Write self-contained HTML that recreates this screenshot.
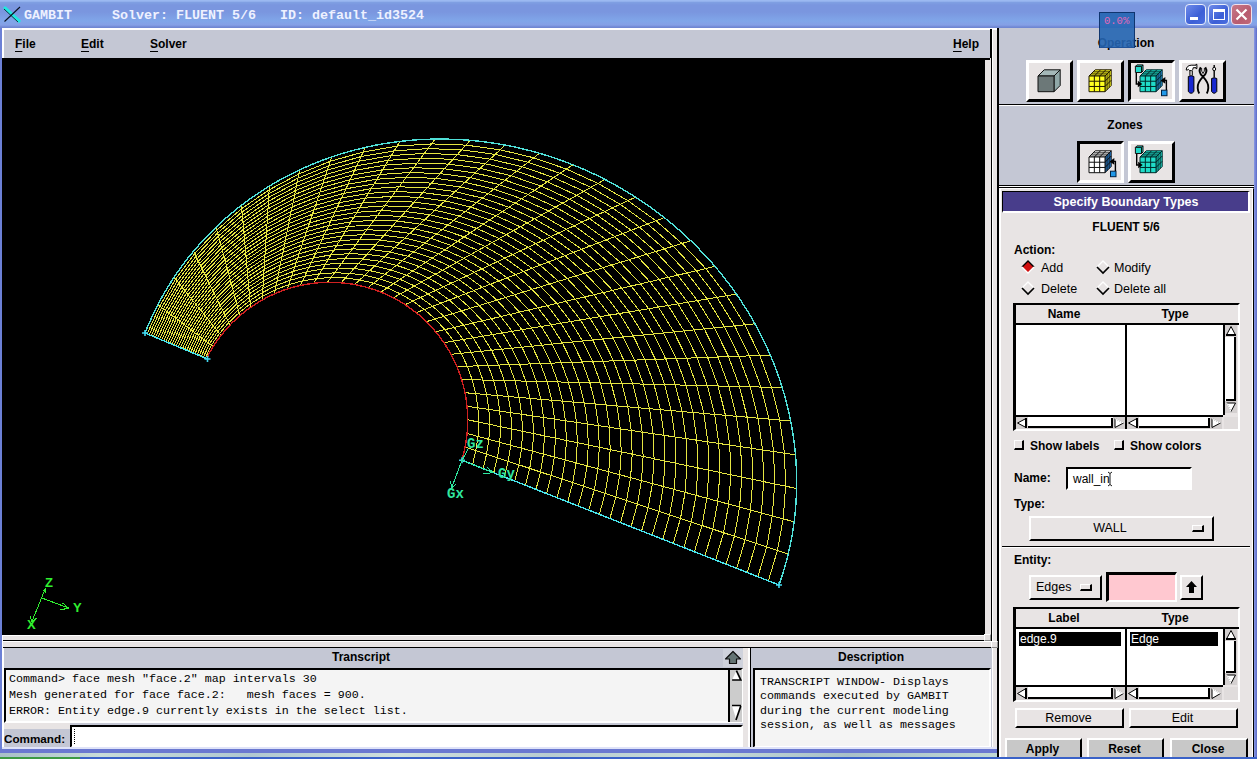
<!DOCTYPE html>
<html><head><meta charset="utf-8"><title>GAMBIT</title>
<style>
html,body{margin:0;padding:0;}
body{width:1257px;height:759px;overflow:hidden;position:relative;background:#6c80d6;font-family:"Liberation Sans",sans-serif;font-size:12px;color:#000;}
.a{position:absolute;box-sizing:border-box;}
.b{font-weight:bold;}
.g{background:#c4c7d4;}
.f{background:#e8e4e4;}
.raised{border-style:solid;border-color:#fff #000 #000 #fff;}
.sunken{border-style:solid;border-color:#000 #fff #fff #000;}
.lbl{position:absolute;white-space:nowrap;line-height:14px;}
.ctr{text-align:center;}
u{text-decoration-thickness:1px;text-underline-offset:2.5px;}
.mono{font-family:"Liberation Mono",monospace;}
</style></head><body>

<!-- title bar -->
<div class="a" id="title" style="left:0;top:0;width:1257px;height:28px;background:linear-gradient(#9bb9f1 0,#9bb9f1 1px,#7f9fe2 2.5px,#7a96df 5px,#7a96df 12px,#80a6e9 21px,#85a0e6 25px,#7088d4 27px,#6f86d0 28px);"></div>
<svg class="a" style="left:3px;top:5px" width="19" height="19" viewBox="0 0 19 19"><path d="M2,3 L16,16" stroke="#20e8e0" stroke-width="3.2" stroke-linecap="round"/><path d="M1,4 L15,17" stroke="#102030" stroke-width="0.9"/><path d="M1.5,16.5 L17,2" stroke="#0a1020" stroke-width="1.1"/></svg>
<div class="lbl mono b" style="left:24px;top:8px;font-size:13.33px;line-height:16px;color:#eef1ff;white-space:pre;">GAMBIT     Solver: FLUENT 5/6   ID: default_id3524</div>
<!-- window buttons -->
<div class="a" style="left:1185px;top:4px;width:21px;height:21px;border:1px solid #e8eefc;border-radius:4px;background:linear-gradient(135deg,#6f8cea,#3c5fd6 60%,#4a6ee0);"><div class="a" style="left:4px;top:12px;width:8px;height:3px;background:#fff"></div></div>
<div class="a" style="left:1208px;top:4px;width:21px;height:21px;border:1px solid #e8eefc;border-radius:4px;background:linear-gradient(135deg,#6f8cea,#3c5fd6 60%,#4a6ee0);"><div class="a" style="left:4px;top:4px;width:12px;height:11px;border:1px solid #fff;border-top:3px solid #fff"></div></div>
<div class="a" style="left:1231px;top:4px;width:21px;height:21px;border:1px solid #f0e0ec;border-radius:4px;background:linear-gradient(135deg,#c87888,#b85c70 60%,#c06878);"><svg class="a" style="left:3px;top:3px" width="13" height="13"><path d="M1.5,1.5 L11.5,11.5 M11.5,1.5 L1.5,11.5" stroke="#fff" stroke-width="2.2"/></svg></div>

<!-- left window frame -->
<div class="a" style="left:2px;top:28px;width:995px;height:720px;background:#fff"></div>
<div class="a g" style="left:4px;top:30px;width:993px;height:718px;"></div>
<!-- menubar -->
<div class="a" style="left:990px;top:29px;width:2px;height:612px;background:#000"></div>
<div class="lbl b" style="left:15px;top:37px;"><u>F</u>ile</div>
<div class="lbl b" style="left:81px;top:37px;"><u>E</u>dit</div>
<div class="lbl b" style="left:150px;top:37px;"><u>S</u>olver</div>
<div class="lbl b" style="left:953px;top:37px;"><u>H</u>elp</div>
<!-- canvas -->
<div class="a" style="left:3px;top:58px;width:988px;height:583px;background:#e8e4e4"></div>
<div class="a" style="left:3px;top:58px;width:987px;height:2px;background:#000"></div>
<div class="a" style="left:3px;top:640px;width:989px;height:1px;background:#000"></div>
<svg class="a" id="cv" style="left:2px;top:58px;background:#000" width="983" height="577" viewBox="-1 0 983 577">
<path d="M202.4,300.1 L208.3,287.2 L216.5,275.5 L225.7,264.6 L236.1,254.7 L247.3,245.9 L259.4,238.2 L272.3,231.8 L285.7,226.6 L299.5,222.9 L313.7,220.5 L328.0,219.5 L342.4,220.0 L356.7,221.9 L370.7,225.2 L384.3,229.9 L397.3,235.8 L409.8,243.1 L421.4,251.5 L432.2,261.0 L441.9,271.6 L450.6,283.0 L458.1,295.3 L464.3,308.2 L469.2,321.7 L472.8,335.6 L474.9,349.8 L475.7,364.1 L475.0,378.4 L472.8,392.5 L469.6,406.5M200.3,299.3 L206.5,285.8 L214.9,273.5 L224.5,262.2 L235.3,251.8 L247.0,242.5 L259.7,234.4 L273.1,227.6 L287.2,222.2 L301.7,218.3 L316.6,215.8 L331.6,214.8 L346.7,215.3 L361.7,217.3 L376.4,220.7 L390.7,225.6 L404.4,231.9 L417.4,239.5 L429.7,248.3 L441.0,258.3 L451.2,269.4 L460.3,281.4 L468.2,294.3 L474.8,307.9 L479.9,322.0 L483.6,336.6 L485.9,351.4 L486.6,366.4 L485.9,381.4 L483.6,396.1 L480.1,410.6M198.2,298.4 L204.7,284.4 L213.3,271.6 L223.3,259.7 L234.5,248.8 L246.7,239.1 L259.9,230.6 L273.9,223.5 L288.6,217.8 L303.9,213.7 L319.4,211.0 L335.2,210.0 L351.0,210.5 L366.7,212.6 L382.1,216.2 L397.1,221.4 L411.5,227.9 L425.1,235.9 L437.9,245.2 L449.8,255.6 L460.5,267.2 L470.1,279.8 L478.3,293.3 L485.2,307.5 L490.6,322.3 L494.5,337.5 L496.8,353.1 L497.6,368.7 L496.8,384.3 L494.4,399.7 L490.7,414.8M196.2,297.5 L202.8,283.0 L211.8,269.7 L222.1,257.2 L233.7,245.9 L246.4,235.7 L260.2,226.8 L274.8,219.4 L290.1,213.4 L306.0,209.1 L322.3,206.3 L338.8,205.2 L355.3,205.8 L371.7,208.0 L387.8,211.8 L403.5,217.1 L418.5,224.0 L432.8,232.3 L446.2,242.0 L458.6,252.9 L469.9,265.0 L479.8,278.2 L488.5,292.3 L495.7,307.1 L501.3,322.6 L505.4,338.5 L507.8,354.7 L508.6,371.0 L507.7,387.2 L505.2,403.3 L501.3,418.9M194.1,296.7 L201.0,281.6 L210.2,267.7 L220.9,254.8 L232.9,242.9 L246.1,232.3 L260.4,223.0 L275.6,215.2 L291.6,209.0 L308.2,204.5 L325.2,201.6 L342.4,200.4 L359.6,201.0 L376.7,203.3 L393.5,207.3 L409.9,212.9 L425.6,220.1 L440.5,228.7 L454.5,238.8 L467.4,250.2 L479.2,262.9 L489.6,276.6 L498.6,291.2 L506.1,306.7 L512.0,322.8 L516.2,339.4 L518.7,356.3 L519.5,373.3 L518.6,390.2 L515.9,406.8 L511.8,423.1M192.0,295.8 L199.1,280.2 L208.6,265.8 L219.7,252.3 L232.1,240.0 L245.8,228.9 L260.6,219.2 L276.5,211.1 L293.1,204.6 L310.4,199.9 L328.0,196.9 L346.0,195.7 L363.9,196.3 L381.7,198.7 L399.3,202.8 L416.3,208.6 L432.6,216.1 L448.2,225.2 L462.8,235.7 L476.2,247.5 L488.5,260.7 L499.4,275.0 L508.7,290.2 L516.6,306.3 L522.7,323.1 L527.1,340.4 L529.7,357.9 L530.5,375.6 L529.5,393.1 L526.7,410.4 L522.4,427.2M189.9,294.9 L197.3,278.8 L207.1,263.9 L218.4,249.9 L231.3,237.0 L245.5,225.5 L260.9,215.4 L277.3,207.0 L294.6,200.2 L312.5,195.3 L330.9,192.1 L349.5,190.9 L368.2,191.5 L386.8,194.0 L405.0,198.3 L422.7,204.4 L439.7,212.2 L455.9,221.6 L471.0,232.5 L485.1,244.8 L497.8,258.5 L509.1,273.3 L518.9,289.2 L527.0,305.9 L533.4,323.4 L537.9,341.3 L540.6,359.5 L541.4,377.9 L540.4,396.1 L537.5,414.0 L533.0,431.4M187.8,294.1 L195.4,277.4 L205.5,261.9 L217.2,247.4 L230.5,234.1 L245.2,222.1 L261.1,211.6 L278.2,202.8 L296.1,195.8 L314.7,190.6 L333.8,187.4 L353.1,186.1 L372.5,186.8 L391.8,189.4 L410.7,193.8 L429.1,200.2 L446.7,208.2 L463.5,218.0 L479.3,229.3 L493.9,242.1 L507.1,256.3 L518.9,271.7 L529.0,288.2 L537.4,305.6 L544.1,323.6 L548.8,342.2 L551.6,361.2 L552.4,380.2 L551.3,399.0 L548.2,417.5 L543.5,435.6M185.8,293.2 L193.6,276.0 L204.0,260.0 L216.0,244.9 L229.7,231.1 L244.9,218.7 L261.4,207.8 L279.0,198.7 L297.6,191.4 L316.9,186.0 L336.7,182.7 L356.7,181.3 L376.8,182.0 L396.8,184.7 L416.4,189.4 L435.5,195.9 L453.8,204.3 L471.2,214.4 L487.6,226.2 L502.7,239.4 L516.4,254.1 L528.6,270.1 L539.1,287.2 L547.9,305.2 L554.8,323.9 L559.6,343.2 L562.5,362.8 L563.4,382.4 L562.2,402.0 L559.0,421.1 L554.1,439.7M183.7,292.3 L191.8,274.6 L202.4,258.0 L214.8,242.5 L228.9,228.2 L244.6,215.3 L261.6,204.0 L279.8,194.5 L299.1,187.0 L319.0,181.4 L339.5,178.0 L360.3,176.6 L381.1,177.3 L401.8,180.1 L422.1,184.9 L441.9,191.7 L460.9,200.3 L478.9,210.8 L495.8,223.0 L511.5,236.7 L525.7,252.0 L538.4,268.5 L549.3,286.2 L558.3,304.8 L565.4,324.2 L570.5,344.1 L573.5,364.4 L574.3,384.7 L573.1,404.9 L569.8,424.7 L564.7,443.9M181.6,291.5 L189.9,273.2 L200.8,256.1 L213.6,240.0 L228.1,225.2 L244.3,211.9 L261.9,200.2 L280.7,190.4 L300.5,182.6 L321.2,176.8 L342.4,173.2 L363.9,171.8 L385.4,172.5 L406.8,175.4 L427.9,180.4 L448.3,187.4 L467.9,196.4 L486.6,207.2 L504.1,219.8 L520.3,234.1 L535.0,249.8 L548.1,266.9 L559.4,285.1 L568.8,304.4 L576.1,324.5 L581.4,345.1 L584.4,366.0 L585.3,387.0 L584.0,407.9 L580.6,428.2 L575.2,448.0M179.5,290.6 L188.1,271.8 L199.3,254.2 L212.4,237.6 L227.3,222.3 L244.0,208.5 L262.1,196.4 L281.5,186.3 L302.0,178.2 L323.4,172.2 L345.3,168.5 L367.5,167.0 L389.8,167.8 L411.9,170.8 L433.6,175.9 L454.7,183.2 L475.0,192.5 L494.3,203.7 L512.4,216.7 L529.1,231.4 L544.4,247.6 L557.9,265.2 L569.5,284.1 L579.2,304.0 L586.8,324.7 L592.2,346.0 L595.4,367.6 L596.3,389.3 L594.9,410.8 L591.3,431.8 L585.8,452.2M177.4,289.7 L186.2,270.4 L197.7,252.2 L211.2,235.1 L226.5,219.3 L243.6,205.1 L262.3,192.6 L282.4,182.1 L303.5,173.8 L325.5,167.6 L348.1,163.8 L371.1,162.3 L394.1,163.0 L416.9,166.1 L439.3,171.5 L461.1,178.9 L482.0,188.5 L502.0,200.1 L520.7,213.5 L538.0,228.7 L553.7,245.4 L567.6,263.6 L579.7,283.1 L589.7,303.6 L597.5,325.0 L603.1,347.0 L606.3,369.3 L607.2,391.6 L605.8,413.7 L602.1,435.4 L596.4,456.3M175.3,288.9 L184.4,269.0 L196.1,250.3 L209.9,232.6 L225.7,216.4 L243.3,201.7 L262.6,188.8 L283.2,178.0 L305.0,169.4 L327.7,163.0 L351.0,159.1 L374.6,157.5 L398.4,158.3 L421.9,161.5 L445.0,167.0 L467.5,174.7 L489.1,184.6 L509.6,196.5 L528.9,210.3 L546.8,226.0 L563.0,243.2 L577.4,262.0 L589.8,282.1 L600.1,303.3 L608.2,325.3 L613.9,347.9 L617.3,370.9 L618.2,393.9 L616.7,416.7 L612.9,439.0 L606.9,460.5M173.2,288.0 L182.5,267.6 L194.6,248.4 L208.7,230.2 L224.9,213.4 L243.0,198.3 L262.8,185.0 L284.1,173.9 L306.5,165.0 L329.9,158.4 L353.9,154.3 L378.2,152.7 L402.7,153.5 L426.9,156.8 L450.7,162.5 L473.9,170.5 L496.2,180.6 L517.3,192.9 L537.2,207.2 L555.6,223.3 L572.3,241.1 L587.1,260.4 L599.9,281.1 L610.6,302.9 L618.9,325.6 L624.8,348.9 L628.2,372.5 L629.2,396.2 L627.6,419.6 L623.6,442.5 L617.5,464.6M171.2,287.1 L180.7,266.2 L193.0,246.4 L207.5,227.7 L224.1,210.4 L242.7,194.9 L263.1,181.2 L284.9,169.7 L308.0,160.6 L332.0,153.8 L356.7,149.6 L381.8,147.9 L407.0,148.8 L431.9,152.2 L456.5,158.0 L480.3,166.2 L503.2,176.7 L525.0,189.3 L545.5,204.0 L564.4,220.6 L581.6,238.9 L596.9,258.8 L610.1,280.1 L621.0,302.5 L629.6,325.8 L635.7,349.8 L639.2,374.1 L640.1,398.5 L638.5,422.6 L634.4,446.1 L628.1,468.8M169.1,286.3 L178.9,264.9 L191.4,244.5 L206.3,225.3 L223.3,207.5 L242.4,191.5 L263.3,177.4 L285.7,165.6 L309.5,156.2 L334.2,149.2 L359.6,144.9 L385.4,143.2 L411.3,144.1 L437.0,147.5 L462.2,153.5 L486.7,162.0 L510.3,172.7 L532.7,185.7 L553.7,200.8 L573.2,217.9 L590.9,236.7 L606.6,257.2 L620.2,279.0 L631.5,302.1 L640.3,326.1 L646.5,350.7 L650.1,375.7 L651.1,400.8 L649.4,425.5 L645.2,449.7 L638.6,473.0M167.0,285.4 L177.0,263.5 L189.9,242.5 L205.1,222.8 L222.6,204.5 L242.1,188.1 L263.5,173.6 L286.6,161.5 L311.0,151.7 L336.4,144.6 L362.5,140.1 L389.0,138.4 L415.6,139.3 L442.0,142.9 L467.9,149.1 L493.1,157.7 L517.3,168.8 L540.4,182.2 L562.0,197.7 L582.0,215.2 L600.2,234.5 L616.4,255.5 L630.3,278.0 L641.9,301.7 L651.0,326.4 L657.4,351.7 L661.1,377.4 L662.0,403.1 L660.3,428.5 L656.0,453.2 L649.2,477.1M164.9,284.5 L175.2,262.1 L188.3,240.6 L203.9,220.3 L221.8,201.6 L241.8,184.7 L263.8,169.8 L287.4,157.3 L312.5,147.3 L338.5,140.0 L365.3,135.4 L392.6,133.6 L419.9,134.6 L447.0,138.2 L473.6,144.6 L499.5,153.5 L524.4,164.9 L548.1,178.6 L570.3,194.5 L590.8,212.5 L609.5,232.3 L626.1,253.9 L640.5,277.0 L652.4,301.3 L661.7,326.6 L668.2,352.6 L672.0,379.0 L673.0,405.4 L671.2,431.4 L666.7,456.8 L659.8,481.3M162.8,283.7 L173.3,260.7 L186.7,238.7 L202.6,217.9 L221.0,198.6 L241.5,181.3 L264.0,166.0 L288.3,153.2 L313.9,142.9 L340.7,135.4 L368.2,130.7 L396.2,128.8 L424.2,129.8 L452.0,133.6 L479.3,140.1 L505.9,149.2 L531.5,160.9 L555.7,175.0 L578.6,191.3 L599.7,209.8 L618.8,230.2 L635.9,252.3 L650.6,276.0 L662.8,301.0 L672.3,326.9 L679.1,353.6 L683.0,380.6 L684.0,407.6 L682.1,434.3 L677.5,460.4 L670.3,485.4M160.8,282.8 L171.5,259.3 L185.2,236.7 L201.4,215.4 L220.2,195.7 L241.2,177.9 L264.3,162.2 L289.1,149.0 L315.4,138.5 L342.9,130.8 L371.1,126.0 L399.7,124.1 L428.5,125.1 L457.0,128.9 L485.1,135.6 L512.3,145.0 L538.5,157.0 L563.4,171.4 L586.8,188.1 L608.5,207.1 L628.2,228.0 L645.6,250.7 L660.7,275.0 L673.3,300.6 L683.0,327.2 L689.9,354.5 L693.9,382.2 L694.9,409.9 L693.0,437.3 L688.3,463.9 L680.9,489.6M158.7,281.9 L169.6,257.9 L183.6,234.8 L200.2,213.0 L219.4,192.7 L240.9,174.5 L264.5,158.4 L290.0,144.9 L316.9,134.1 L345.0,126.2 L374.0,121.2 L403.3,119.3 L432.8,120.3 L462.0,124.3 L490.8,131.1 L518.7,140.8 L545.6,153.0 L571.1,167.8 L595.1,185.0 L617.3,204.4 L637.5,225.8 L655.4,249.1 L670.9,274.0 L683.7,300.2 L693.7,327.5 L700.8,355.5 L704.9,383.8 L705.9,412.2 L703.9,440.2 L699.0,467.5 L691.5,493.7M156.6,281.1 L167.8,256.5 L182.0,232.9 L199.0,210.5 L218.6,189.8 L240.6,171.1 L264.8,154.6 L290.8,140.8 L318.4,129.7 L347.2,121.6 L376.8,116.5 L406.9,114.5 L437.1,115.6 L467.1,119.6 L496.5,126.7 L525.1,136.5 L552.6,149.1 L578.8,164.2 L603.4,181.8 L626.1,201.7 L646.8,223.6 L665.2,247.5 L681.0,272.9 L694.1,299.8 L704.4,327.7 L711.7,356.4 L715.8,385.5 L716.9,414.5 L714.8,443.2 L709.8,471.1 L702.0,497.9M154.5,280.2 L166.0,255.1 L180.5,230.9 L197.8,208.0 L217.8,186.8 L240.3,167.7 L265.0,150.8 L291.6,136.6 L319.9,125.3 L349.4,117.0 L379.7,111.8 L410.5,109.7 L441.4,110.8 L472.1,115.0 L502.2,122.2 L531.5,132.3 L559.7,145.1 L586.5,160.6 L611.6,178.6 L634.9,199.0 L656.1,221.4 L674.9,245.8 L691.1,271.9 L704.6,299.4 L715.1,328.0 L722.5,357.4 L726.8,387.1 L727.8,416.8 L725.7,446.1 L720.6,474.7 L712.6,502.1M152.4,279.3 L164.1,253.7 L178.9,229.0 L196.6,205.6 L217.0,183.9 L240.0,164.3 L265.2,147.0 L292.5,132.5 L321.4,120.9 L351.5,112.4 L382.6,107.1 L414.1,105.0 L445.7,106.1 L477.1,110.4 L507.9,117.7 L537.9,128.0 L566.7,141.2 L594.2,157.1 L619.9,175.5 L643.7,196.3 L665.4,219.3 L684.7,244.2 L701.3,270.9 L715.0,299.0 L725.8,328.3 L733.4,358.3 L737.7,388.7 L738.8,419.1 L736.6,449.1 L731.4,478.2 L723.2,506.2M150.3,278.5 L162.3,252.3 L177.3,227.0 L195.4,203.1 L216.2,180.9 L239.7,160.9 L265.5,143.2 L293.3,128.4 L322.9,116.5 L353.7,107.8 L385.4,102.3 L417.7,100.2 L450.0,101.3 L482.1,105.7 L513.7,113.2 L544.3,123.8 L573.8,137.3 L601.9,153.5 L628.2,172.3 L652.6,193.6 L674.7,217.1 L694.4,242.6 L711.4,269.9 L725.5,298.6 L736.5,328.6 L744.2,359.2 L748.7,390.3 L749.8,421.4 L747.5,452.0 L742.1,481.8 L733.7,510.4M148.2,277.6 L160.4,250.9 L175.8,225.1 L194.1,200.7 L215.4,178.0 L239.3,157.5 L265.7,139.4 L294.2,124.2 L324.4,112.1 L355.9,103.2 L388.3,97.6 L421.2,95.4 L454.3,96.6 L487.1,101.1 L519.4,108.8 L550.7,119.5 L580.9,133.3 L609.5,149.9 L636.5,169.1 L661.4,190.9 L684.0,214.9 L704.2,241.0 L721.5,268.9 L735.9,298.3 L747.2,328.8 L755.1,360.2 L759.6,391.9 L760.7,423.7 L758.4,455.0 L752.9,485.4 L744.3,514.5M146.2,276.7 L158.6,249.5 L174.2,223.2 L192.9,198.2 L214.6,175.0 L239.0,154.0 L266.0,135.6 L295.0,120.1 L325.9,107.7 L358.0,98.6 L391.2,92.9 L424.8,90.6 L458.6,91.8 L492.2,96.4 L525.1,104.3 L557.1,115.3 L587.9,129.4 L617.2,146.3 L644.7,166.0 L670.2,188.2 L693.3,212.7 L713.9,239.4 L731.7,267.9 L746.4,297.9 L757.9,329.1 L766.0,361.1 L770.6,393.6 L771.7,426.0 L769.3,457.9 L763.7,488.9 L754.9,518.7M144.1,275.9 L156.7,248.1 L172.6,221.2 L191.7,195.7 L213.8,172.1 L238.7,150.6 L266.2,131.8 L295.9,116.0 L327.3,103.3 L360.2,94.0 L394.0,88.1 L428.4,85.9 L462.9,87.1 L497.2,91.8 L530.8,99.8 L563.5,111.1 L595.0,125.4 L624.9,142.7 L653.0,162.8 L679.0,185.5 L702.7,210.5 L723.7,237.7 L741.8,266.8 L756.8,297.5 L768.5,329.4 L776.8,362.1 L781.5,395.2 L782.6,428.3 L780.2,460.8 L774.4,492.5 L765.4,522.8M210.2,288.6 L154.9,246.7M218.0,277.4 L171.1,219.3M227.0,267.1 L190.5,193.3M236.9,257.7 L213.0,169.1M247.6,249.3 L238.4,147.2M259.2,242.0 L266.4,128.0M271.4,235.9 L296.7,111.8M284.2,231.1 L328.8,98.9M297.4,227.5 L362.4,89.4M310.8,225.2 L396.9,83.4M324.4,224.3 L432.0,81.1M338.1,224.8 L467.2,82.3M351.6,226.6 L502.2,87.1M364.9,229.7 L536.5,95.3M377.9,234.1 L569.9,106.8M390.3,239.8 L602.0,121.5M402.1,246.7 L632.6,139.1M413.1,254.7 L661.3,159.6M423.3,263.7 L687.8,182.8M432.6,273.8 L712.0,208.4M440.8,284.7 L733.4,236.1M447.9,296.3 L751.9,265.8M453.9,308.6 L767.3,297.1M458.5,321.5 L779.2,329.6M461.9,334.7 L787.7,363.0M464.0,348.2 L792.5,396.8M464.7,361.8 L793.6,430.5M464.1,375.5 L791.1,463.8M462.1,389.0 L785.2,496.1" fill="none" stroke="#e6e642" stroke-width="1" shape-rendering="crispEdges"/>
<path d="M204.5,301.0 L205.0,297.5 L206.7,294.5 L208.4,291.5 L210.2,288.6 L212.0,285.7 L214.0,282.9 L216.0,280.1 L218.0,277.4 L220.2,274.8 L222.4,272.1 L224.6,269.6 L227.0,267.1 L229.3,264.6 L231.8,262.3 L234.3,259.9 L236.9,257.7 L239.5,255.5 L242.1,253.3 L244.9,251.3 L247.6,249.3 L250.5,247.4 L253.3,245.5 L256.2,243.7 L259.2,242.0 L262.2,240.4 L265.2,238.8 L268.3,237.3 L271.4,235.9 L274.6,234.6 L277.7,233.3 L280.9,232.1 L284.2,231.1 L287.4,230.0 L290.7,229.1 L294.0,228.3 L297.4,227.5 L300.7,226.8 L304.1,226.2 L307.4,225.7 L310.8,225.2 L314.2,224.9 L317.6,224.6 L321.0,224.4 L324.4,224.3 L327.9,224.3 L331.3,224.4 L334.7,224.5 L338.1,224.8 L341.5,225.1 L344.9,225.5 L348.3,226.0 L351.6,226.6 L355.0,227.2 L358.3,228.0 L361.6,228.8 L364.9,229.7 L368.2,230.7 L371.4,231.7 L374.7,232.9 L377.9,234.1 L381.0,235.4 L384.1,236.8 L387.2,238.2 L390.3,239.8 L393.3,241.4 L396.3,243.1 L399.2,244.8 L402.1,246.7 L404.9,248.6 L407.7,250.5 L410.4,252.6 L413.1,254.7 L415.8,256.8 L418.3,259.1 L420.9,261.4 L423.3,263.7 L425.8,266.2 L428.1,268.6 L430.4,271.2 L432.6,273.8 L434.8,276.4 L436.9,279.1 L438.9,281.9 L440.8,284.7 L442.7,287.5 L444.5,290.4 L446.3,293.3 L447.9,296.3 L449.5,299.3 L451.1,302.4 L452.5,305.5 L453.9,308.6 L455.2,311.8 L456.4,315.0 L457.5,318.2 L458.5,321.5 L459.5,324.7 L460.4,328.0 L461.2,331.4 L461.9,334.7 L462.6,338.0 L463.1,341.4 L463.6,344.8 L464.0,348.2 L464.3,351.6 L464.5,355.0 L464.6,358.4 L464.7,361.8 L464.7,365.2 L464.5,368.7 L464.3,372.1 L464.1,375.5 L463.7,378.9 L463.2,382.2 L462.7,385.6 L462.1,389.0 L461.4,392.3 L460.6,395.6 L459.7,398.9 L459.0,402.3" fill="none" stroke="#d02020" stroke-width="1.4" shape-rendering="crispEdges"/>
<path d="M142.0,275.0 L144.9,267.9 L148.1,260.8 L151.4,253.7 L154.9,246.7 L158.6,239.7 L162.6,232.9 L166.7,226.0 L171.1,219.3 L175.6,212.6 L180.4,206.1 L185.3,199.6 L190.5,193.3 L195.8,187.1 L201.4,180.9 L207.1,175.0 L213.0,169.1 L219.1,163.4 L225.4,157.9 L231.8,152.5 L238.4,147.2 L245.2,142.2 L252.1,137.3 L259.2,132.6 L266.4,128.0 L273.8,123.7 L281.3,119.5 L289.0,115.6 L296.7,111.8 L304.6,108.3 L312.6,104.9 L320.6,101.8 L328.8,98.9 L337.1,96.2 L345.5,93.7 L353.9,91.4 L362.4,89.4 L370.9,87.5 L379.5,85.9 L388.2,84.6 L396.9,83.4 L405.6,82.5 L414.4,81.8 L423.2,81.3 L432.0,81.1 L440.8,81.1 L449.6,81.3 L458.4,81.7 L467.2,82.3 L476.0,83.2 L484.8,84.3 L493.5,85.6 L502.2,87.1 L510.9,88.8 L519.5,90.8 L528.0,92.9 L536.5,95.3 L545.0,97.9 L553.4,100.7 L561.7,103.6 L569.9,106.8 L578.1,110.2 L586.2,113.8 L594.2,117.5 L602.0,121.5 L609.8,125.6 L617.5,130.0 L625.1,134.5 L632.6,139.1 L639.9,144.0 L647.2,149.1 L654.3,154.3 L661.3,159.6 L668.1,165.2 L674.8,170.9 L681.4,176.8 L687.8,182.8 L694.1,189.0 L700.2,195.3 L706.2,201.7 L712.0,208.4 L717.6,215.1 L723.0,222.0 L728.3,229.0 L733.4,236.1 L738.3,243.4 L743.1,250.8 L747.6,258.2 L751.9,265.8 L756.1,273.5 L760.0,281.3 L763.8,289.2 L767.3,297.1 L770.6,305.1 L773.7,313.2 L776.6,321.4 L779.2,329.6 L781.7,337.9 L783.9,346.3 L785.9,354.6 L787.7,363.0 L789.2,371.4 L790.5,379.9 L791.6,388.3 L792.5,396.8 L793.1,405.3 L793.5,413.7 L793.7,422.1 L793.6,430.5 L793.3,438.9 L792.8,447.3 L792.1,455.5 L791.1,463.8 L790.0,472.0 L788.6,480.1 L787.0,488.1 L785.2,496.1 L783.2,503.9 L781.0,511.7 L778.6,519.4 L776.0,527.0" fill="none" stroke="#50e0d8" stroke-width="1.4" shape-rendering="crispEdges"/>
<path d="M204.5,301.0 L142.0,275.0 M459.0,402.3 L776.0,527.0" fill="none" stroke="#48e4ec" stroke-width="1.4" shape-rendering="crispEdges"/>
<path d="M201.5,301.0 h6 M204.5,298.0 v6 M139.0,275.0 h6 M142.0,272.0 v6 M456.0,402.3 h6 M459.0,399.3 v6 M773.0,527.0 h6 M776.0,524.0 v6 " fill="none" stroke="#40d8f0" stroke-width="1.6"/>
<g fill="none" stroke="#30f030" stroke-width="1" shape-rendering="crispEdges"><path d="M38.600,539.900 L42.300,530.500 M38.600,539.900 L65.500,550 M38.600,539.900 L28.600,564.200 M42.300,530.500 l-2.500,3 M42.300,530.500 l0.500,4 M65.500,550 l-6,-5 M65.500,550 l-8,2 M28.600,564.200 l-1,-6 M28.600,564.200 l5,-4"/></g>
<g font-family="Liberation Sans" font-size="13" font-weight="bold" fill="#30f030"><text x="42" y="529">Z</text><text x="70" y="554">Y</text><text x="24" y="571">X</text></g>
<g fill="none" stroke="#30e8a0" stroke-width="1" shape-rendering="crispEdges"><path d="M459,402.300 L448.300,430.700 M459,402.300 L490.400,414.700 M459,402.300 L464.900,391.600 M448.300,430.700 l-0.500,-8 M448.300,430.700 l5,-5 M490.400,414.700 l-7,-6 M490.400,414.700 l-10,1"/></g>
<g font-family="Liberation Mono" font-size="14" font-weight="bold" fill="#30e8a0"><text x="464" y="390">Gz</text><text x="495" y="420">Gy</text><text x="444" y="440">Gx</text></g>
</svg>
<!-- sashes -->
<div class="a f" style="left:3px;top:641px;width:994px;height:7px;border-top:1px solid #fff"></div>
<div class="a" style="left:3px;top:647px;width:994px;height:1px;background:#000"></div>
<div class="a" style="left:3px;top:635px;width:987px;height:1px;background:#fff"></div>


<div class="a f" style="left:992px;top:30px;width:5px;height:718px;border-left:1px solid #fff"></div>
<div class="a" style="left:997px;top:28px;width:2px;height:731px;background:#000"></div>

<div class="a f" style="left:984px;top:634px;width:7px;height:7px;border-style:solid;border-width:1px;border-color:#fff #888 #888 #fff;background:#e4e0e0"></div>
<div class="a f" style="left:991px;top:641px;width:7px;height:7px;border-style:solid;border-width:1px;border-color:#fff #888 #888 #fff;background:#e4e0e0"></div>
<!-- transcript -->
<div class="lbl b ctr" style="left:300px;top:650px;width:122px;">Transcript</div>
<div class="a" style="left:723px;top:649px;width:20px;height:18px;background:#cfd2dc;"><svg width="20" height="18"><path d="M10,2.5 L17.500,10 L13.500,10 L13.500,14.500 L6.500,14.500 L6.500,10 L2.500,10 Z" fill="#647474" stroke="#101010" stroke-width="1.2" stroke-linejoin="round"/></svg></div>
<div class="a sunken" style="left:4px;top:668px;width:739px;height:55px;border-width:2px;background:#f4f4f4;"></div>
<div class="lbl mono" style="left:9px;top:671px;font-size:11.67px;line-height:16px;white-space:pre;">Command&gt; face mesh "face.2" map intervals 30
Mesh generated for face face.2:   mesh faces = 900.
ERROR: Entity edge.9 currently exists in the select list.</div>
<!-- transcript scrollbar -->
<div class="a" style="left:728px;top:670px;width:14px;height:52px;background:#cccccc;border-left:2px solid #000;"></div>
<svg class="a" style="left:730px;top:670px" width="12" height="52"><rect width="12" height="52" fill="#cccccc"/><path d="M6.400,0.600 L2.100,10 L10.800,10 Z" fill="#fff"/><path d="M6.400,0.600 L10.800,10 L2.100,10" fill="none" stroke="#000" stroke-width="1.700"/><path d="M2.100,36 L10.800,36 L6.400,50 Z" fill="#fff"/><path d="M2,35.500 H11 M10.800,36 L6,50" fill="none" stroke="#000" stroke-width="1.700"/></svg>
<!-- command -->
<div class="a f" style="left:4px;top:723px;width:66px;height:6px;"></div>
<div class="lbl b" style="left:4px;top:732px;font-size:11.7px;">Command:</div>
<div class="a sunken" style="left:70px;top:725px;width:673px;height:23px;border-width:2px;background:#fff;"></div>
<div class="a" style="left:74px;top:729px;width:0;height:15px;border-left:1px dotted #000"></div>
<!-- vertical sash between transcript and description -->
<div class="a f" style="left:743px;top:648px;width:7px;height:100px;border-right:2px solid #fff"></div>
<div class="a" style="left:750px;top:647px;width:1px;height:101px;background:#000"></div>

<!-- description -->
<div class="lbl b ctr" style="left:811px;top:650px;width:120px;">Description</div>
<div class="a sunken" style="left:753px;top:668px;width:238px;height:80px;border-width:2px;background:#f4f4f4;"></div>
<div class="lbl mono" style="left:760px;top:675px;font-size:11.67px;line-height:14.3px;white-space:pre;">TRANSCRIPT WINDOW- Displays
commands executed by GAMBIT
during the current modeling
session, as well as messages</div>

<!-- bottom frame of left window -->
<div class="a" style="left:0;top:747px;width:997px;height:2px;background:#dfe3f8"></div>
<div class="a" style="left:0;top:749px;width:997px;height:4px;background:#6a78d0"></div>
<div class="a" style="left:0;top:753px;width:997px;height:4px;background:linear-gradient(90deg,#a8c0c8,#c8dcd8 10%,#b0c8d0 25%,#d0e0dc 40%,#b8ccd0 55%,#c8dcd8 70%,#a8c0c8 85%,#c0d8d4);"></div>
<div class="a" style="left:0;top:757px;width:1257px;height:2px;background:#3a62c8"></div>
<div class="a" style="left:0;top:28px;width:2px;height:721px;background:#6c80d6"></div>
<div class="a" style="left:0;top:757px;width:80px;height:2px;background:#3c9a44"></div>

<!-- right panel top -->
<div class="a g" style="left:999px;top:28px;width:1255px;height:159px;width:255px;"></div>
<div class="a" style="left:1254px;top:28px;width:3px;height:731px;background:linear-gradient(90deg,#8a9ae4,#5c6cc8)"></div>
<div class="lbl b ctr" style="left:1066px;top:36px;width:120px;">Operation</div>
<!-- progress box overlay -->
<div class="a" style="left:1099px;top:12px;width:36px;height:36px;background:rgba(38,102,178,0.9);border:1px solid rgba(12,48,104,0.9);border-bottom-color:rgba(30,80,150,0.9)"></div>
<div class="lbl mono" style="left:1104px;top:15px;font-size:10.5px;line-height:13px;color:#e268b8;">0.0%</div>
<!-- operation buttons -->
<div class="a raised f" style="left:1026px;top:60px;width:47px;height:42px;border-width:3px;">
<svg width="41" height="36" viewBox="0 0 41 36"><g stroke="#101010" stroke-width="1" stroke-linejoin="round"><path d="M9,13 L15.2,6.8 L31.2,6.8 L25,13 Z" fill="#a4b8b8"/><path d="M25,13 L31.2,6.8 L31.2,22.5 L25,28.7 Z" fill="#90a8a8"/><path d="M9,13 H25 V28.7 H9 Z" fill="#6c7878"/></g></svg></div>
<div class="a raised f" style="left:1077px;top:60px;width:47px;height:42px;border-width:3px;">
<svg width="41" height="36" viewBox="0 0 41 36"><g stroke="#201800" stroke-width="1" stroke-linejoin="round"><path d="M9,13 L15.2,6.8 L31.2,6.8 L25,13 Z" fill="#ffff20"/><path d="M25,13 L31.2,6.8 L31.2,22.5 L25,28.7 Z" fill="#ffff20"/><path d="M9,13 H25 V28.7 H9 Z" fill="#ffff20"/><path d="M14.3333,13 V28.7 M9,18.2333 H25 M14.3333,13 l6.2,-6.2 M11.0667,10.9333 H27.0667 M27.0667,10.9333 V26.6333 M25,18.2333 l6.2,-6.2 M19.6667,13 V28.7 M9,23.4667 H25 M19.6667,13 l6.2,-6.2 M13.1333,8.86667 H29.1333 M29.1333,8.86667 V24.5667 M25,23.4667 l6.2,-6.2 " fill="none"/></g></svg></div>
<div class="a sunken f" style="left:1128px;top:60px;width:47px;height:42px;border-width:3px;">
<svg width="41" height="36" viewBox="0 0 41 36"><g stroke="#002828" stroke-width="1" stroke-linejoin="round"><path d="M9,13 L15.2,6.8 L31.2,6.8 L25,13 Z" fill="#20dcc8"/><path d="M25,13 L31.2,6.8 L31.2,22.5 L25,28.7 Z" fill="#2890d8"/><path d="M9,13 H25 V28.7 H9 Z" fill="#20dcc8"/><path d="M14.3333,13 V28.7 M9,18.2333 H25 M14.3333,13 l6.2,-6.2 M11.0667,10.9333 H27.0667 M27.0667,10.9333 V26.6333 M25,18.2333 l6.2,-6.2 M19.6667,13 V28.7 M9,23.4667 H25 M19.6667,13 l6.2,-6.2 M13.1333,8.86667 H29.1333 M29.1333,8.86667 V24.5667 M25,23.4667 l6.2,-6.2 " fill="none"/></g><path d="M4.400,3.400 H10.500 V9.500 H4.400 Z M4.400,3.400 L5.900,1.900 H12 V8 L10.500,9.500 M10.500,3.400 L12,1.900" fill="#20d8c8" stroke="#101010" stroke-width="1" stroke-linejoin="round"/><path d="M5.3,10 V21 H7.3" fill="none" stroke="#000" stroke-width="1.4"/><path d="M6.8,17.800 L11.3,21 L6.8,24.200 Z" fill="#000"/><rect x="30.500" y="27.200" width="5.500" height="5.500" fill="#2098e8" stroke="#002040" stroke-width="1"/><path d="M35.400,27 V17.400 H33" fill="none" stroke="#000" stroke-width="1.400"/><path d="M34.300,14 L29.600,17.400 L34.300,20.800 Z" fill="#000"/></svg></div>
<div class="a raised f" style="left:1179px;top:60px;width:47px;height:42px;border-width:3px;">
<svg width="41" height="36" viewBox="0 0 41 36"><g stroke="#000" stroke-width="1" stroke-linejoin="round"><path d="M6.300,13.500 q2.800,-1.600 5.600,0 V28.500 q-2.800,3.600 -5.600,0 Z" fill="#1828d0"/><path d="M7.900,7.600 V12.600 M10.300,7.600 V12.600" fill="none"/><path d="M4.200,7 q0.300,-4.500 5,-4.800 h4.800 v-0.800 h0.900 v4.200 h-0.900 v-0.900 h-2.800 q0,2.300 -1.500,2.900 h-2 q-1.200,-2.200 -2.600,-0.500 Z" fill="#fff"/><path d="M29.600,15.500 q2.600,-1.500 5.200,0 V28.500 q-2.600,3.600 -5.200,0 Z" fill="#1828d0"/><path d="M32.200,2 V14.500" fill="none" stroke-width="1.4"/><ellipse cx="32.200" cy="6" rx="1.500" ry="1.700" fill="#fff"/></g><path d="M18.7,4.2 q-3,5 2.2,9.4 Q27,20 26.3,25 Q26,28.5 24.8,30.5 M23.3,4.2 q3,5 -2.2,9.4 Q15,20 15.7,25 Q16,28.5 17.2,30.5" fill="none" stroke="#000" stroke-width="1.9"/><path d="M19.600,5 q-0.500,3.500 1.400,5.500 q1.900,-2 1.400,-5.500" fill="none" stroke="#000" stroke-width="0.9"/></svg></div>
<div class="a" style="left:999px;top:104px;width:255px;height:1px;background:#000"></div>
<div class="a" style="left:999px;top:105px;width:255px;height:1px;background:#fff"></div>
<div class="lbl b ctr" style="left:1065px;top:118px;width:120px;">Zones</div>
<div class="a sunken f" style="left:1077px;top:141px;width:47px;height:42px;border-width:3px;">
<svg width="41" height="36" viewBox="0 0 41 36"><g stroke="#101010" stroke-width="1" stroke-linejoin="round"><path d="M9,13 L15.2,6.8 L31.2,6.8 L25,13 Z" fill="#ffffff"/><path d="M25,13 L31.2,6.8 L31.2,22.5 L25,28.7 Z" fill="#2080d8"/><path d="M9,13 H25 V28.7 H9 Z" fill="#ffffff"/><path d="M14.3333,13 V28.7 M9,18.2333 H25 M14.3333,13 l6.2,-6.2 M11.0667,10.9333 H27.0667 M27.0667,10.9333 V26.6333 M25,18.2333 l6.2,-6.2 M19.6667,13 V28.7 M9,23.4667 H25 M19.6667,13 l6.2,-6.2 M13.1333,8.86667 H29.1333 M29.1333,8.86667 V24.5667 M25,23.4667 l6.2,-6.2 " fill="none"/></g><rect x="30.500" y="27.200" width="5.500" height="5.500" fill="#2098e8" stroke="#002040" stroke-width="1"/><path d="M35.400,27 V17.400 H33" fill="none" stroke="#000" stroke-width="1.400"/><path d="M34.300,14 L29.600,17.400 L34.300,20.800 Z" fill="#000"/></svg></div>
<div class="a raised f" style="left:1128px;top:141px;width:47px;height:42px;border-width:3px;">
<svg width="41" height="36" viewBox="0 0 41 36"><g stroke="#002828" stroke-width="1" stroke-linejoin="round"><path d="M9,13 L15.2,6.8 L31.2,6.8 L25,13 Z" fill="#20dcc8"/><path d="M25,13 L31.2,6.8 L31.2,22.5 L25,28.7 Z" fill="#20dcc8"/><path d="M9,13 H25 V28.7 H9 Z" fill="#20dcc8"/><path d="M14.3333,13 V28.7 M9,18.2333 H25 M14.3333,13 l6.2,-6.2 M11.0667,10.9333 H27.0667 M27.0667,10.9333 V26.6333 M25,18.2333 l6.2,-6.2 M19.6667,13 V28.7 M9,23.4667 H25 M19.6667,13 l6.2,-6.2 M13.1333,8.86667 H29.1333 M29.1333,8.86667 V24.5667 M25,23.4667 l6.2,-6.2 " fill="none"/></g><path d="M4.400,3.400 H10.500 V9.500 H4.400 Z M4.400,3.400 L5.900,1.900 H12 V8 L10.500,9.500 M10.500,3.400 L12,1.900" fill="#20d8c8" stroke="#101010" stroke-width="1" stroke-linejoin="round"/><path d="M5.7,10 V21 H7.7" fill="none" stroke="#000" stroke-width="1.4"/><path d="M7.2,17.800 L11.7,21 L7.2,24.200 Z" fill="#000"/></svg></div>
<div class="a" style="left:999px;top:185px;width:255px;height:1px;background:#000"></div>
<div class="a" style="left:999px;top:186px;width:255px;height:1px;background:#fff"></div>
<!-- form panel -->
<div class="a" style="left:999px;top:187px;width:255px;height:1px;background:#000"></div>
<div class="a f" style="left:999px;top:188px;width:255px;height:569px;border-left:2px solid #fff;border-right:1px solid #000;border-top:1px solid #fff;"></div>
<div class="a" style="left:1252px;top:188px;width:1px;height:569px;background:#fff"></div>
<div class="a" style="left:1002px;top:191px;width:248px;height:22px;background:#483d8b;border-style:solid;border-width:1px 2px 2px 1px;border-color:#000 #fff #fff #000;"></div>
<div class="lbl b ctr" style="left:1002px;top:195px;width:248px;color:#fff;font-size:12.5px;">Specify Boundary Types</div>
<div class="lbl b ctr" style="left:1002px;top:220px;width:248px;">FLUENT 5/6</div>
<div class="lbl b" style="left:1014px;top:243px;">Action:</div>
<!-- radio diamonds -->
<svg class="a" style="left:1020px;top:259px" width="100" height="40">
<path d="M2,8 L8,2 L14,8 L8,14 Z" fill="#d01010"/><path d="M2,8 L8,2 L14,8" fill="none" stroke="#000" stroke-width="1.4"/><path d="M2,8 L8,14 L14,8" fill="none" stroke="#fff" stroke-width="1.4"/>
<path d="M77,8 L83,2 L89,8 L83,14 Z" fill="#e8e4e4"/><path d="M77,8 L83,2 L89,8" fill="none" stroke="#fff" stroke-width="1.4"/><path d="M77,8 L83,14 L89,8" fill="none" stroke="#000" stroke-width="1.6"/>
<path d="M2,29 L8,23 L14,29 L8,35 Z" fill="#e8e4e4"/><path d="M2,29 L8,23 L14,29" fill="none" stroke="#fff" stroke-width="1.4"/><path d="M2,29 L8,35 L14,29" fill="none" stroke="#000" stroke-width="1.6"/>
<path d="M77,29 L83,23 L89,29 L83,35 Z" fill="#e8e4e4"/><path d="M77,29 L83,23 L89,29" fill="none" stroke="#fff" stroke-width="1.4"/><path d="M77,29 L83,35 L89,29" fill="none" stroke="#000" stroke-width="1.6"/>
</svg>
<div class="lbl" style="left:1041px;top:261px;font-size:12.5px;">Add</div>
<div class="lbl" style="left:1114px;top:261px;font-size:12.5px;">Modify</div>
<div class="lbl" style="left:1041px;top:282px;font-size:12.5px;">Delete</div>
<div class="lbl" style="left:1114px;top:282px;font-size:12.5px;">Delete all</div>
<!-- list 1 -->
<div class="a" style="left:1013px;top:303px;width:227px;height:128px;border-style:solid;border-width:2px 2px 2px 3px;border-color:#000 #fff #fff #000;"></div>
<div class="lbl b ctr" style="left:1015px;top:307px;width:98px;">Name</div>
<div class="lbl b ctr" style="left:1127px;top:307px;width:96px;">Type</div>
<div class="a" style="left:1015px;top:323px;width:224px;height:2px;background:#000"></div>
<div class="a" style="left:1016px;top:325px;width:109px;height:90px;background:#fff;"></div>
<div class="a" style="left:1125px;top:325px;width:98px;height:90px;background:#fff;border-left:2px solid #000;"></div>
<svg class="a" style="left:1225px;top:325px" width="12" height="88"><rect width="12" height="88" fill="#d4d0d0"/><rect x="0" y="12" width="10" height="64" fill="#fff"/><path d="M10,12 V75 H1" fill="none" stroke="#000" stroke-width="2"/><path d="M1.5,10 L6,1.5 L10.5,10 Z" fill="#fff" stroke="#000" stroke-width="1"/><path d="M1,10 H11" stroke="#000" stroke-width="2"/><path d="M1.5,78 L6,86.5 L10.5,78 Z" fill="#fff" stroke="#000" stroke-width="1"/><path d="M1.5,78 L6,86.5" stroke="#fff" stroke-width="1.2"/></svg><div class="a" style="left:1223px;top:325px;width:2px;height:90px;background:#000"></div><div class="a" style="left:1015px;top:415px;width:208px;height:2px;background:#000"></div><svg class="a" style="left:1016px;top:417px" width="109" height="12"><rect width="109" height="12" fill="#d4d0d0"/><rect x="12" y="0" width="85" height="10" fill="#fff"/><path d="M12,10 H96 V1" fill="none" stroke="#000" stroke-width="2"/><path d="M10,1.5 L1.5,6 L10,10.5 Z" fill="#fff" stroke="#000" stroke-width="1"/><path d="M10,1 V11" stroke="#000" stroke-width="2"/><path d="M99,1.5 L107.5,6 L99,10.5 Z" fill="#fff" stroke="#000" stroke-width="1"/><path d="M99,1.5 L107.5,6" stroke="#fff" stroke-width="1.2"/></svg><svg class="a" style="left:1127px;top:417px" width="95" height="12"><rect width="95" height="12" fill="#d4d0d0"/><rect x="12" y="0" width="71" height="10" fill="#fff"/><path d="M12,10 H82 V1" fill="none" stroke="#000" stroke-width="2"/><path d="M10,1.5 L1.5,6 L10,10.5 Z" fill="#fff" stroke="#000" stroke-width="1"/><path d="M10,1 V11" stroke="#000" stroke-width="2"/><path d="M85,1.5 L93.5,6 L85,10.5 Z" fill="#fff" stroke="#000" stroke-width="1"/><path d="M85,1.5 L93.5,6" stroke="#fff" stroke-width="1.2"/></svg><div class="a" style="left:1125px;top:417px;width:2px;height:12px;background:#000"></div><div class="a" style="left:1224px;top:417px;width:14px;height:12px;background:#e0dcdc"></div>
<!-- checkboxes -->
<div class="a" style="left:1014px;top:440px;width:10px;height:10px;border-style:solid;border-width:1px 2px 2px 1px;border-color:#fff #000 #000 #fff;"></div>
<div class="lbl b" style="left:1030px;top:439px;">Show labels</div>
<div class="a" style="left:1114px;top:440px;width:10px;height:10px;border-style:solid;border-width:1px 2px 2px 1px;border-color:#fff #000 #000 #fff;"></div>
<div class="lbl b" style="left:1130px;top:439px;">Show colors</div>
<!-- name -->
<div class="lbl b" style="left:1014px;top:471px;">Name:</div>
<div class="a" style="left:1066px;top:467px;width:126px;height:23px;background:#fff;border-style:solid;border-width:2px;border-color:#000 #fff #fff #000;"></div>
<div class="lbl" style="left:1073px;top:472px;">wall_in</div>
<svg class="a" style="left:1107px;top:471px" width="7" height="16"><path d="M1,1 L3,2.500 L5,1 M3,2.500 V13.500 M1,15 L3,13.500 L5,15" fill="none" stroke="#000" stroke-width="0.9"/></svg>
<div class="lbl b" style="left:1014px;top:497px;">Type:</div>
<div class="a raised" style="left:1029px;top:516px;width:185px;height:25px;border-width:2px;"></div>
<div class="lbl ctr" style="left:1070px;top:521px;width:80px;font-size:12.5px;">WALL</div>
<div class="a raised" style="left:1192px;top:525px;width:12px;height:7px;border-width:1px 2px 2px 1px;"></div>
<div class="a" style="left:1002px;top:546px;width:248px;height:1px;background:#000"></div>
<div class="a" style="left:1002px;top:547px;width:248px;height:1px;background:#fff"></div>
<!-- entity -->
<div class="lbl b" style="left:1014px;top:553px;">Entity:</div>
<div class="a raised" style="left:1029px;top:575px;width:73px;height:25px;border-width:2px;"></div>
<div class="lbl" style="left:1036px;top:580px;font-size:12.5px;">Edges</div>
<div class="a raised" style="left:1080px;top:584px;width:12px;height:7px;border-width:1px 2px 2px 1px;"></div>
<div class="a" style="left:1106px;top:572px;width:71px;height:30px;background:#ffc8d0;border-style:solid;border-width:3px 2px 2px 3px;border-color:#000 #fff #fff #000;"></div>
<div class="a raised" style="left:1180px;top:575px;width:23px;height:25px;border-width:2px;"><svg width="19" height="21"><path d="M9.500,4 L15,10 L12,10 L12,16 L7,16 L7,10 L4,10 Z" fill="#000"/></svg></div>
<!-- list 2 -->
<div class="a" style="left:1013px;top:607px;width:227px;height:95px;border-style:solid;border-width:2px 2px 2px 3px;border-color:#000 #fff #fff #000;"></div>
<div class="lbl b ctr" style="left:1015px;top:611px;width:98px;">Label</div>
<div class="lbl b ctr" style="left:1127px;top:611px;width:96px;">Type</div>
<div class="a" style="left:1015px;top:627px;width:224px;height:2px;background:#000"></div>
<div class="a" style="left:1016px;top:629px;width:109px;height:57px;background:#fff;"></div>
<div class="a" style="left:1125px;top:629px;width:98px;height:57px;background:#fff;border-left:2px solid #000;"></div>
<div class="a" style="left:1019px;top:632px;width:102px;height:14px;background:#000"></div>
<div class="a" style="left:1130px;top:632px;width:88px;height:14px;background:#000"></div>
<div class="lbl" style="left:1020px;top:632px;color:#fff;">edge.9</div>
<div class="lbl" style="left:1131px;top:632px;color:#fff;">Edge</div>
<svg class="a" style="left:1225px;top:629px" width="12" height="56"><rect width="12" height="56" fill="#d4d0d0"/><rect x="0" y="12" width="10" height="32" fill="#fff"/><path d="M10,12 V43 H1" fill="none" stroke="#000" stroke-width="2"/><path d="M1.5,10 L6,1.5 L10.5,10 Z" fill="#fff" stroke="#000" stroke-width="1"/><path d="M1,10 H11" stroke="#000" stroke-width="2"/><path d="M1.5,46 L6,54.5 L10.5,46 Z" fill="#fff" stroke="#000" stroke-width="1"/><path d="M1.5,46 L6,54.5" stroke="#fff" stroke-width="1.2"/></svg><div class="a" style="left:1223px;top:629px;width:2px;height:56px;background:#000"></div><div class="a" style="left:1015px;top:685px;width:208px;height:2px;background:#000"></div><svg class="a" style="left:1016px;top:687px" width="109" height="13"><rect width="109" height="13" fill="#d4d0d0"/><rect x="12" y="0" width="85" height="11" fill="#fff"/><path d="M12,11 H96 V1" fill="none" stroke="#000" stroke-width="2"/><path d="M10,1.5 L1.5,6.5 L10,11.5 Z" fill="#fff" stroke="#000" stroke-width="1"/><path d="M10,1 V12" stroke="#000" stroke-width="2"/><path d="M99,1.5 L107.5,6.5 L99,11.5 Z" fill="#fff" stroke="#000" stroke-width="1"/><path d="M99,1.5 L107.5,6.5" stroke="#fff" stroke-width="1.2"/></svg><svg class="a" style="left:1127px;top:687px" width="95" height="13"><rect width="95" height="13" fill="#d4d0d0"/><rect x="12" y="0" width="71" height="11" fill="#fff"/><path d="M12,11 H82 V1" fill="none" stroke="#000" stroke-width="2"/><path d="M10,1.5 L1.5,6.5 L10,11.5 Z" fill="#fff" stroke="#000" stroke-width="1"/><path d="M10,1 V12" stroke="#000" stroke-width="2"/><path d="M85,1.5 L93.5,6.5 L85,11.5 Z" fill="#fff" stroke="#000" stroke-width="1"/><path d="M85,1.5 L93.5,6.5" stroke="#fff" stroke-width="1.2"/></svg><div class="a" style="left:1125px;top:687px;width:2px;height:13px;background:#000"></div><div class="a" style="left:1224px;top:687px;width:14px;height:13px;background:#e0dcdc"></div>
<div class="a raised" style="left:1015px;top:708px;width:109px;height:20px;border-width:2px;"></div>
<div class="lbl ctr" style="left:1015px;top:711px;width:107px;font-size:12.5px;">Remove</div>
<div class="a raised" style="left:1129px;top:708px;width:109px;height:20px;border-width:2px;"></div>
<div class="lbl ctr" style="left:1129px;top:711px;width:107px;font-size:12.5px;">Edit</div>
<!-- bottom buttons -->
<div class="a raised" style="left:1005px;top:738px;width:77px;height:24px;border-width:2px;background:#c8c8c8"></div>
<div class="lbl b ctr" style="left:1005px;top:742px;width:75px;">Apply</div>
<div class="a raised" style="left:1087px;top:738px;width:77px;height:24px;border-width:2px;background:#c8c8c8"></div>
<div class="lbl b ctr" style="left:1087px;top:742px;width:75px;">Reset</div>
<div class="a raised" style="left:1170px;top:738px;width:78px;height:24px;border-width:2px;background:#c8c8c8"></div>
<div class="lbl b ctr" style="left:1170px;top:742px;width:76px;">Close</div>
<div class="a" style="left:997px;top:757px;width:260px;height:2px;background:#3a62c8"></div>

</body></html>
